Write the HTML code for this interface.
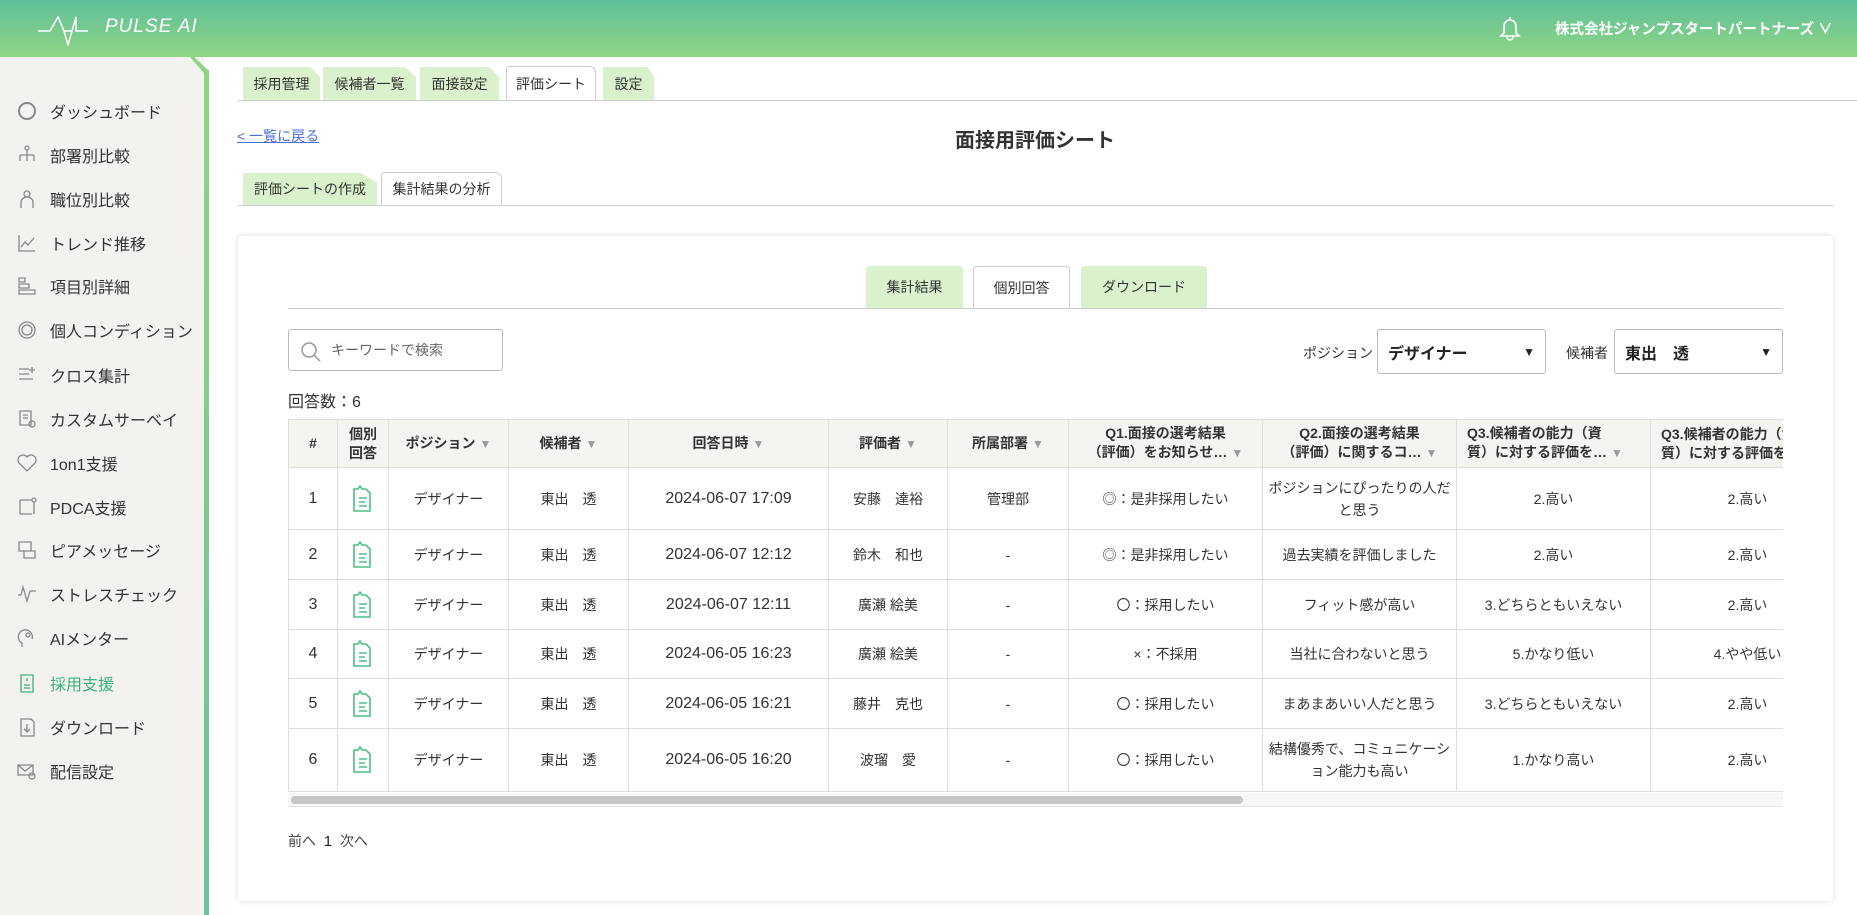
<!DOCTYPE html>
<html><head><meta charset="utf-8"><style>
*{box-sizing:border-box;margin:0;padding:0}
body{width:1857px;height:915px;overflow:hidden;background:#fff;font-family:"Liberation Sans","Noto Sans CJK JP",sans-serif;color:#333;position:relative}
.hdr{position:absolute;left:0;top:0;width:1857px;height:57px;background:linear-gradient(#5ebf9b,#90d584)}
.logo{position:absolute;left:38px;top:14px}
.logotxt{position:absolute;left:105px;top:16px;color:#fff;font-size:19px;font-style:italic;letter-spacing:1px}
.co{position:absolute;left:1555px;top:18px;color:#fff;font-weight:bold;font-size:14.5px}
.side{position:absolute;left:0;top:57px;width:204px;height:858px;background:#f3f2ef}
.sbar{position:absolute;left:204px;top:70px;width:5px;height:845px;background:linear-gradient(#8fd483,#6cc29a)}
.si{position:absolute;left:16px;font-size:16px;color:#333;display:flex;align-items:center}
.si svg{width:22px;height:22px;margin-right:12px;stroke:#888;fill:none;stroke-width:1.3}
.si.act{color:#3eb17a}.si.act svg{stroke:#3eb17a}
.tab{position:absolute;height:33px;background:#d9f2cd;font-size:14px;display:flex;align-items:center;justify-content:center;color:#333;clip-path:polygon(0 0,88% 0,100% 30%,100% 100%,0 100%)}
.tab.on{background:#fff;border:1px solid #ccc;border-bottom:none;clip-path:none;border-radius:3px 6px 0 0}
.hl{position:absolute;height:1px;background:#ccc}
.back{position:absolute;left:237px;top:126px;font-size:14px;color:#4a6fd8;text-decoration:underline}
.title{position:absolute;left:0;width:100%;top:124px;text-align:center;padding-left:213px;font-size:20px;font-weight:bold;color:#333}
.card{position:absolute;left:238px;top:236px;width:1595px;height:665px;background:#fff;box-shadow:0 0 6px rgba(0,0,0,.15);border-radius:3px}
.itab{position:absolute;top:266px;height:42px;font-size:14px;display:flex;align-items:center;justify-content:center;border-radius:4px 4px 0 0;background:#d9f2cd}
.itab.on{background:#fff;border:1px solid #ccc;border-bottom:none}
.search{position:absolute;left:288px;top:329px;width:215px;height:42px;border:1px solid #bbb;border-radius:3px;font-size:14px;color:#666;display:flex;align-items:center;padding-left:42px}
.sel{position:absolute;top:329px;height:45px;border:1px solid #bbb;border-radius:3px;font-size:16px;font-weight:bold;display:flex;align-items:center;padding-left:10px;color:#222}
.sel:after{content:"▼";position:absolute;right:10px;font-size:12px}
.lbl{position:absolute;top:343px;font-size:14px;color:#333}
.tw{position:absolute;left:288px;top:419px;width:1495px;height:374px;overflow:hidden}
table{position:absolute;left:0;top:0;width:1556px;border-collapse:collapse;table-layout:fixed;font-size:14px}
th{background:#f5f4f1;font-weight:bold;height:48px;border:1px solid #ddd;font-size:14px;line-height:19px}
td{border:1px solid #ddd;text-align:center;color:#333;line-height:22px}
td.d{font-size:16px}
th .a{color:#999;font-size:12px;margin-left:4px}
.doc{display:inline-block;vertical-align:middle}
</style></head><body>
<div class="hdr">
<svg class="logo" width="60" height="32" viewBox="0 0 60 32" fill="none" stroke="#fff" stroke-width="1.5"><path d="M0 17h12l8-14 6 14h8M26 17l4 14 8-28v14h12M38 17h12"/></svg>
<div class="logotxt">PULSE AI</div>
<svg style="position:absolute;left:1498px;top:14px" width="24" height="28" viewBox="0 0 24 28" fill="none" stroke="#fff" stroke-width="1.6"><path d="M12 3v2M6 19V12a6 6 0 0112 0v7l3 3H3z M9 23a3 3 0 006 0"/></svg>
<div class="co">株式会社ジャンプスタートパートナーズ ∨</div>
</div>
<div class="side"></div><div class="sbar"></div>
<svg style="position:absolute;left:190px;top:57px" width="20" height="16"><polygon points="0,0 4,0 19,14 19,16 14,16" fill="#8fd483"/></svg>
<div class="si" style="top:99px"><svg viewBox="0 0 22 22"><circle cx="11" cy="11" r="8" stroke-width="2"/></svg>ダッシュボード</div>
<div class="si" style="top:143px"><svg viewBox="0 0 22 22"><circle cx="11" cy="4" r="2"/><path d="M11 6v5M4 11h14M4 11v6M11 11v6M18 11v6"/></svg>部署別比較</div>
<div class="si" style="top:187px"><svg viewBox="0 0 22 22"><circle cx="11" cy="6" r="3"/><path d="M5 20v-6a6 5 0 0112 0v6"/></svg>職位別比較</div>
<div class="si" style="top:231px"><svg viewBox="0 0 22 22"><path d="M3 3v16h16M5 15l4-5 3 3 6-7"/></svg>トレンド推移</div>
<div class="si" style="top:274px"><svg viewBox="0 0 22 22"><path d="M3 3h6v4H3zM3 9h10v4H3zM3 15h16v4H3z"/></svg>項目別詳細</div>
<div class="si" style="top:318px"><svg viewBox="0 0 22 22"><circle cx="11" cy="11" r="5"/><circle cx="11" cy="11" r="8"/></svg>個人コンディション</div>
<div class="si" style="top:363px"><svg viewBox="0 0 22 22"><path d="M3 5h10M3 10h10M3 15h14M16 3v6M13 6h6"/></svg>クロス集計</div>
<div class="si" style="top:407px"><svg viewBox="0 0 22 22"><path d="M4 3h11v14H4zM7 7h5M7 10h5"/><circle cx="16" cy="16" r="3"/></svg>カスタムサーベイ</div>
<div class="si" style="top:451px"><svg viewBox="0 0 22 22"><path d="M11 19L3 11a4.5 4.5 0 018-6 4.5 4.5 0 018 6z"/></svg>1on1支援</div>
<div class="si" style="top:495px"><svg viewBox="0 0 22 22"><path d="M4 4h12M4 4v14M18 6v12M4 18h12"/><circle cx="18" cy="4" r="2"/></svg>PDCA支援</div>
<div class="si" style="top:538px"><svg viewBox="0 0 22 22"><path d="M3 3h12v9H3zM8 12h11v7H8z"/></svg>ピアメッセージ</div>
<div class="si" style="top:582px"><svg viewBox="0 0 22 22"><path d="M2 12h3l2-8 4 14 3-10h6"/></svg>ストレスチェック</div>
<div class="si" style="top:626px"><svg viewBox="0 0 22 22"><path d="M6 20v-4a7 7 0 1110-4"/><circle cx="12" cy="8" r="2"/></svg>AIメンター</div>
<div class="si act" style="top:671px"><svg viewBox="0 0 22 22"><path d="M5 3h12v17H5zM8 13h6M8 16h6M11 6v3"/></svg>採用支援</div>
<div class="si" style="top:715px"><svg viewBox="0 0 22 22"><path d="M5 3h10l3 3v14H5zM11 8v8M8 13l3 3 3-3"/></svg>ダウンロード</div>
<div class="si" style="top:759px"><svg viewBox="0 0 22 22"><path d="M2 5h15v10H2zM2 5l7 6 8-6"/><circle cx="16" cy="16" r="3"/></svg>配信設定</div>

<div class="tab" style="left:243px;top:67px;width:77px">採用管理</div>
<div class="tab" style="left:323px;top:67px;width:93px">候補者一覧</div>
<div class="tab" style="left:420px;top:67px;width:79px">面接設定</div>
<div class="tab on" style="left:506px;top:66px;width:90px;height:35px">評価シート</div>
<div class="tab" style="left:603px;top:67px;width:51px">設定</div>
<div class="hl" style="left:238px;top:100px;width:1619px"></div>
<div class="back">&lt; 一覧に戻る</div>
<div class="title">面接用評価シート</div>
<div class="tab" style="left:243px;top:173px;width:134px;height:32px">評価シートの作成</div>
<div class="tab on" style="left:381px;top:172px;width:121px;height:33px">集計結果の分析</div>
<div class="hl" style="left:238px;top:205px;width:1595px"></div>

<div class="card"></div>
<div class="itab" style="left:866px;width:97px">集計結果</div>
<div class="itab on" style="left:973px;width:97px">個別回答</div>
<div class="itab" style="left:1081px;width:126px">ダウンロード</div>
<div class="hl" style="left:288px;top:308px;width:1495px"></div>
<div class="search"><svg style="position:absolute;left:10px;top:10px" width="24" height="24" viewBox="0 0 24 24" fill="none" stroke="#999" stroke-width="1.5"><circle cx="10" cy="10" r="7"/><path d="M15 15l6 6"/></svg>キーワードで検索</div>
<div class="lbl" style="left:1303px">ポジション</div>
<div class="sel" style="left:1377px;width:169px">デザイナー</div>
<div class="lbl" style="left:1566px">候補者</div>
<div class="sel" style="left:1614px;width:169px">東出　透</div>
<div style="position:absolute;left:288px;top:388px;font-size:16px">回答数：6</div>

<div class="tw"><table>
<colgroup><col style="width:49px"><col style="width:51px"><col style="width:120px"><col style="width:120px"><col style="width:200px"><col style="width:119px"><col style="width:121px"><col style="width:194px"><col style="width:194px"><col style="width:194px"><col style="width:194px"></colgroup>
<tr><th>#</th><th>個別<br>回答</th><th>ポジション<span class="a">▼</span></th><th>候補者<span class="a">▼</span></th><th>回答日時<span class="a">▼</span></th><th>評価者<span class="a">▼</span></th><th>所属部署<span class="a">▼</span></th><th>Q1.面接の選考結果<br>（評価）をお知らせ…<span class="a">▼</span></th><th>Q2.面接の選考結果<br>（評価）に関するコ…<span class="a">▼</span></th><th style="text-align:left;padding-left:10px">Q3.候補者の能力（資<br>質）に対する評価を…<span class="a">▼</span></th><th style="text-align:left;padding-left:10px">Q3.候補者の能力（資<br>質）に対する評価を…</th></tr>
<tr style="height:62px"><td class="d">1</td><td><svg class="doc" width="22" height="28" viewBox="0 0 22 28" fill="none" stroke="#4cbf88" stroke-width="1.6"><path d="M2 4h4l2-3 2 3h4l4 4v18H2zM7 13h8M7 17h6M7 21h8"/></svg></td><td>デザイナー</td><td>東出　透</td><td class="d">2024-06-07 17:09</td><td>安藤　達裕</td><td>管理部</td><td>◎：是非採用したい</td><td>ポジションにぴったりの人だと思う</td><td>2.高い</td><td>2.高い</td></tr>
<tr style="height:50px"><td class="d">2</td><td><svg class="doc" width="22" height="28" viewBox="0 0 22 28" fill="none" stroke="#4cbf88" stroke-width="1.6"><path d="M2 4h4l2-3 2 3h4l4 4v18H2zM7 13h8M7 17h6M7 21h8"/></svg></td><td>デザイナー</td><td>東出　透</td><td class="d">2024-06-07 12:12</td><td>鈴木　和也</td><td>-</td><td>◎：是非採用したい</td><td>過去実績を評価しました</td><td>2.高い</td><td>2.高い</td></tr>
<tr style="height:50px"><td class="d">3</td><td><svg class="doc" width="22" height="28" viewBox="0 0 22 28" fill="none" stroke="#4cbf88" stroke-width="1.6"><path d="M2 4h4l2-3 2 3h4l4 4v18H2zM7 13h8M7 17h6M7 21h8"/></svg></td><td>デザイナー</td><td>東出　透</td><td class="d">2024-06-07 12:11</td><td>廣瀬 絵美</td><td>-</td><td>〇：採用したい</td><td>フィット感が高い</td><td>3.どちらともいえない</td><td>2.高い</td></tr>
<tr style="height:49px"><td class="d">4</td><td><svg class="doc" width="22" height="28" viewBox="0 0 22 28" fill="none" stroke="#4cbf88" stroke-width="1.6"><path d="M2 4h4l2-3 2 3h4l4 4v18H2zM7 13h8M7 17h6M7 21h8"/></svg></td><td>デザイナー</td><td>東出　透</td><td class="d">2024-06-05 16:23</td><td>廣瀬 絵美</td><td>-</td><td>×：不採用</td><td>当社に合わないと思う</td><td>5.かなり低い</td><td>4.やや低い</td></tr>
<tr style="height:50px"><td class="d">5</td><td><svg class="doc" width="22" height="28" viewBox="0 0 22 28" fill="none" stroke="#4cbf88" stroke-width="1.6"><path d="M2 4h4l2-3 2 3h4l4 4v18H2zM7 13h8M7 17h6M7 21h8"/></svg></td><td>デザイナー</td><td>東出　透</td><td class="d">2024-06-05 16:21</td><td>藤井　克也</td><td>-</td><td>〇：採用したい</td><td>まあまあいい人だと思う</td><td>3.どちらともいえない</td><td>2.高い</td></tr>
<tr style="height:63px"><td class="d">6</td><td><svg class="doc" width="22" height="28" viewBox="0 0 22 28" fill="none" stroke="#4cbf88" stroke-width="1.6"><path d="M2 4h4l2-3 2 3h4l4 4v18H2zM7 13h8M7 17h6M7 21h8"/></svg></td><td>デザイナー</td><td>東出　透</td><td class="d">2024-06-05 16:20</td><td>波瑠　愛</td><td>-</td><td>〇：採用したい</td><td>結構優秀で、コミュニケーション能力も高い</td><td>1.かなり高い</td><td>2.高い</td></tr>
</table></div>
<div style="position:absolute;left:288px;top:793px;width:1495px;height:14px;background:#f7f7f7;border-bottom:1px solid #e5e5e5"></div>
<div style="position:absolute;left:291px;top:796px;width:952px;height:8px;background:#c6c6c6;border-radius:4px"></div>
<div style="position:absolute;left:288px;top:831px;font-size:14px;color:#444">前へ &nbsp;<span style="font-size:15px;color:#222">1</span>&nbsp; 次へ</div>
</body></html>
